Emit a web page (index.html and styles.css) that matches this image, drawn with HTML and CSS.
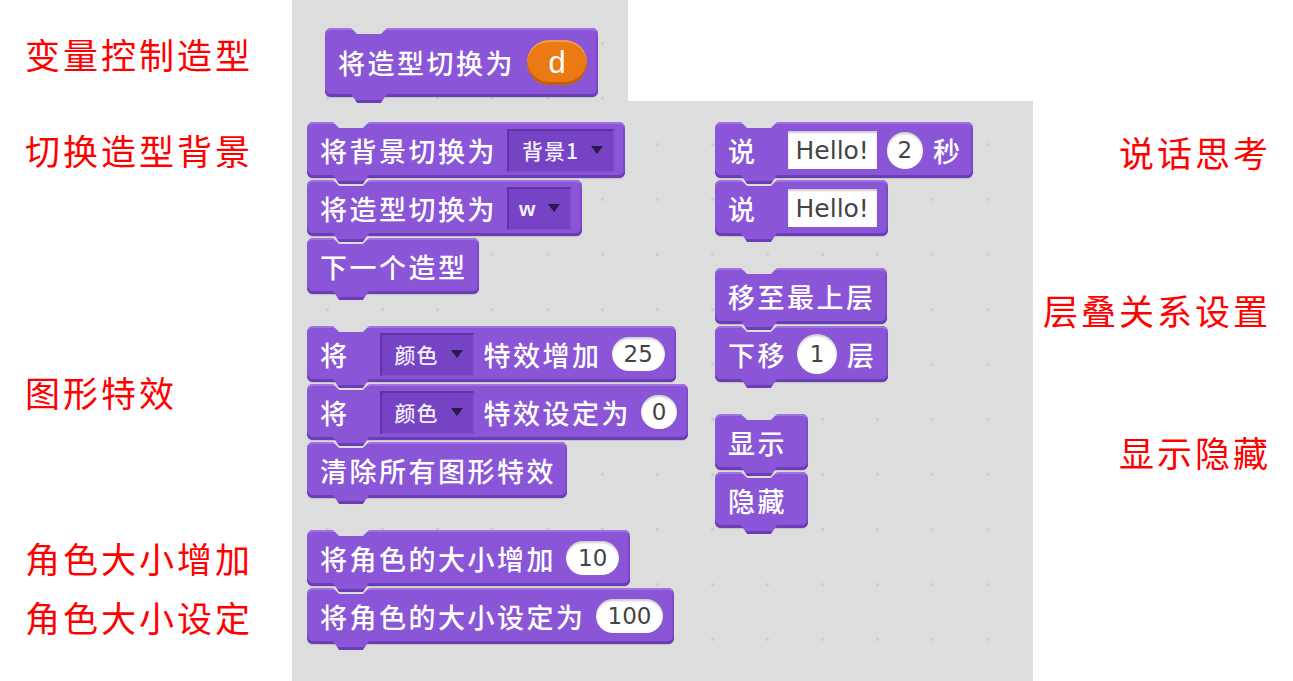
FILE: index.html
```html
<!DOCTYPE html>
<html lang="zh-CN">
<head>
<meta charset="utf-8">
<title>Scratch 外观积木</title>
<link rel="stylesheet" href="styles.css">
</head>
<body>
<div class="page">
  <div class="labels labels-left">
    <div class="label l1">变量控制造型</div>
    <div class="label l2">切换造型背景</div>
    <div class="label l3">图形特效</div>
    <div class="label l4">角色大小增加</div>
    <div class="label l5">角色大小设定</div>
  </div>

  <div class="canvas">
    <div class="pane pane-top">
      <div class="block block-big"><span class="t">将造型切换为</span><span class="rep">d</span></div>
    </div>
    <div class="pane pane-main">
      <div class="col col-left">
        <div class="stack">
          <div class="block"><span class="t">将背景切换为</span><span class="dd">背景1<i class="arrow"></i></span></div>
          <div class="block"><span class="t">将造型切换为</span><span class="dd dd-latin">w<i class="arrow"></i></span></div>
          <div class="block"><span class="t">下一个造型</span></div>
        </div>
        <div class="stack">
          <div class="block"><span class="t sp">将</span><span class="dd">颜色<i class="arrow"></i></span><span class="t">特效增加</span><span class="num">25</span></div>
          <div class="block"><span class="t sp">将</span><span class="dd">颜色<i class="arrow"></i></span><span class="t">特效设定为</span><span class="num num-one">0</span></div>
          <div class="block"><span class="t">清除所有图形特效</span></div>
        </div>
        <div class="stack">
          <div class="block"><span class="t">将角色的大小增加</span><span class="num">10</span></div>
          <div class="block"><span class="t">将角色的大小设定为</span><span class="num">100</span></div>
        </div>
      </div>
      <div class="col col-right">
        <div class="stack">
          <div class="block"><span class="t sp">说</span><span class="txt">Hello!</span><span class="num num-one num-tight">2</span><span class="t">秒</span></div>
          <div class="block"><span class="t sp">说</span><span class="txt">Hello!</span></div>
        </div>
        <div class="stack">
          <div class="block"><span class="t">移至最上层</span></div>
          <div class="block"><span class="t">下移</span><span class="num num-one num-big">1</span><span class="t">层</span></div>
        </div>
        <div class="stack">
          <div class="block block-min"><span class="t">显示</span></div>
          <div class="block block-min"><span class="t">隐藏</span></div>
        </div>
      </div>
    </div>
  </div>

  <div class="labels labels-right">
    <div class="label r1">说话思考</div>
    <div class="label r2">层叠关系设置</div>
    <div class="label r3">显示隐藏</div>
  </div>
</div>
</body>
</html>
```

FILE: styles.css
```css
* { box-sizing: border-box; }
html, body { margin: 0; padding: 0; }
body {
  background: #ffffff;
  width: 1293px;
  height: 681px;
  overflow: hidden;
  font-family: "Noto Sans CJK SC", sans-serif;
}
.page {
  display: flex;
  height: 681px;
}

/* red annotation labels */
.labels {
  display: flex;
  flex-direction: column;
  font-size: 35px;
  line-height: 40px;
  color: #ff0000;
  letter-spacing: 3px;
  white-space: nowrap;
}
.labels-left { width: 292px; padding-left: 25px; }
.labels-right { flex: 1; align-items: flex-end; padding-right: 22px; }
.l1 { margin-top: 34px; }
.l2 { margin-top: 56px; }
.l3 { margin-top: 202px; }
.l4 { margin-top: 126px; }
.l5 { margin-top: 19px; }
.r1 { margin-top: 132px; }
.r2 { margin-top: 118px; }
.r3 { margin-top: 102px; }

/* scripts canvas */
.canvas {
  width: 741px;
  display: flex;
  flex-direction: column;
}
.pane {
  background-color: #dcdddc;
  background-image: radial-gradient(circle, rgba(165, 167, 165, 0.35) 1px, transparent 1.7px);
  background-size: 55px 55px;
  background-position: 8px 16px;
}
.pane-top {
  display: flex;
  align-items: flex-start;
  width: 336px;
  height: 101px;
  padding: 28px 0 0 33px;
}
.pane-main {
  flex: 1;
  display: flex;
  padding: 21px 0 0 15px;
}
.col {
  display: flex;
  flex-direction: column;
  align-items: flex-start;
  gap: 32px;
}
.col-left { width: 408px; }
.stack {
  display: flex;
  flex-direction: column;
  align-items: flex-start;
  gap: 2px;
}

/* command block */
.block {
  position: relative;
  display: flex;
  align-items: center;
  gap: 10px;
  min-height: 56px;
  padding: 0 11px 0 13px;
  background: #8a55d7;
  border-radius: 6px;
  color: #ffffff;
  font-size: 27px;
  font-weight: 500;
  line-height: 1;
  letter-spacing: 2.5px;
  white-space: nowrap;
  box-shadow: inset 0 2px 0 #a074e3, inset 0 -3px 0 #6c3eb6, inset -2px 0 0 #7a4ac8, 0 1px 1px rgba(0, 0, 0, 0.12);
}
.block::before {
  content: "";
  position: absolute;
  top: 0;
  left: 26px;
  width: 36px;
  height: 6px;
  background: #dcdddc;
  clip-path: polygon(0 0, 100% 0, 83% 100%, 17% 100%);
  z-index: 1;
}
.block::after {
  content: "";
  position: absolute;
  bottom: -6px;
  left: 26px;
  width: 36px;
  height: 9px;
  background: linear-gradient(#8a55d7 0 6px, #6c3eb6 6px);
  clip-path: polygon(0 0, 100% 0, 83% 100%, 17% 100%);
  z-index: 2;
}
.block-big {
  min-height: 69px;
  padding: 0 11px 0 13px;
  gap: 12px;
}
.block-min { min-width: 93px; }
.t { display: block; }
.sp { margin-right: 20px; }

/* orange reporter */
.rep {
  display: flex;
  align-items: center;
  justify-content: center;
  width: 60px;
  height: 45px;
  border-radius: 23px;
  background: #ec7a14;
  box-shadow: inset 0 -3px 0 #c45f08, inset 0 2px 0 #f39a4a;
  color: #ffffff;
  font-family: "Liberation Sans", sans-serif;
  font-size: 31px;
  font-weight: 400;
  letter-spacing: 0;
}

/* dropdown */
.dd {
  display: flex;
  align-items: center;
  gap: 12px;
  height: 43px;
  padding: 0 11px 0 15px;
  background: #7543c4;
  box-shadow: inset 2px 2px 0 rgba(40, 10, 90, 0.25), inset -1px -1px 0 rgba(255, 255, 255, 0.08);
  color: #f4efff;
  font-size: 21px;
  font-weight: 500;
  letter-spacing: 1px;
}
.dd-latin {
  font-family: "Liberation Sans", sans-serif;
  font-size: 21px;
  font-weight: 700;
  padding-left: 12px;
}
.arrow {
  display: block;
  width: 0;
  height: 0;
  border-left: 6px solid transparent;
  border-right: 6px solid transparent;
  border-top: 8px solid #2a1a4e;
}

/* numeric round inputs */
.num {
  display: flex;
  align-items: center;
  justify-content: center;
  height: 34px;
  min-width: 36px;
  padding: 0 12px;
  border-radius: 17px;
  background: #ffffff;
  box-shadow: inset 0 2px 2px rgba(0, 0, 0, 0.2);
  color: #444444;
  font-family: "DejaVu Sans", sans-serif;
  font-size: 23px;
  font-weight: 400;
  letter-spacing: 0;
}
.num-one { padding: 0; width: 36px; }
.num-tight { height: 37px; border-radius: 19px; }
.num-big { width: 40px; height: 40px; border-radius: 20px; }

/* text input */
.txt {
  display: flex;
  align-items: center;
  height: 38px;
  padding: 0 8px;
  background: #ffffff;
  box-shadow: inset 0 2px 2px rgba(0, 0, 0, 0.2);
  color: #444444;
  font-family: "DejaVu Sans", sans-serif;
  font-size: 25px;
  font-weight: 400;
  letter-spacing: 0;
}
```
